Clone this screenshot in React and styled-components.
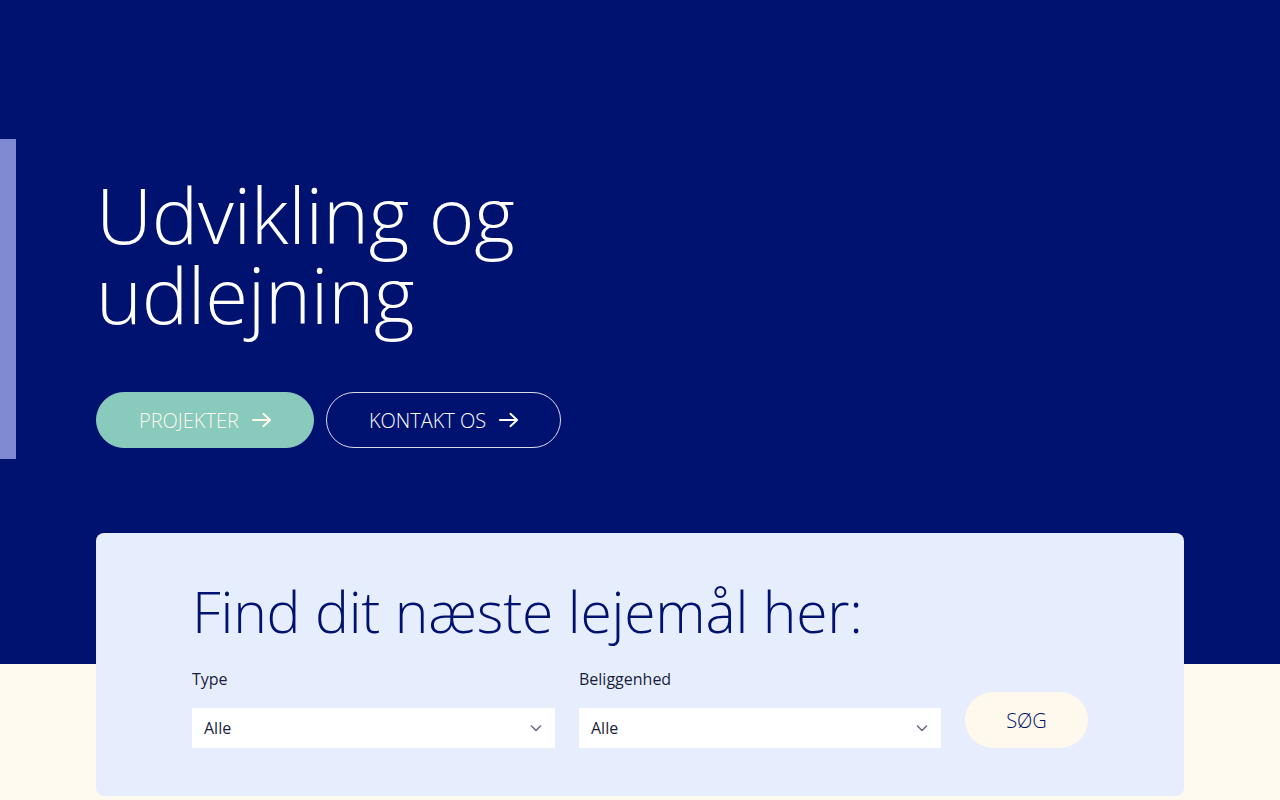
import React from 'react';
import styled, { createGlobalStyle } from 'styled-components';

const GlobalStyle = createGlobalStyle`
  html, body {
    margin: 0;
    padding: 0;
    background: #fffaef;
    font-family: "Open Sans", "Noto Sans", sans-serif;
  }
  * { box-sizing: border-box; }
`;

const Page = styled.div`
  width: 1280px;
  height: 800px;
  overflow: hidden;
  background: linear-gradient(#00126f 0, #00126f 664px, #fffaef 664px);
`;

const Hero = styled.section`
  display: flex;
  padding-top: 139px;
  height: 533px;
`;

const Accent = styled.div`
  width: 16px;
  height: 320px;
  background: #7f8ad3;
  flex-shrink: 0;
`;

const HeroContent = styled.div`
  padding-left: 80px;
  padding-top: 35px;
`;

const Title = styled.h1`
  margin: 0;
  color: #ffffff;
  font-weight: 300;
  font-size: 78px;
  line-height: 80px;
  letter-spacing: -0.3px;
`;

const Actions = styled.div`
  display: flex;
  gap: 12px;
  margin-top: 58px;
`;

const PillButton = styled.a`
  display: inline-flex;
  align-items: center;
  gap: 12px;
  height: 56px;
  padding: 0 41px 0 42px;
  border-radius: 28px;
  font-size: 20px;
  font-weight: 300;
  text-decoration: none;
  background: ${p => (p.$filled ? '#88cabc' : 'transparent')};
  color: ${p => (p.$filled ? '#fff8ea' : '#ffffff')};
  border: 1px solid ${p => (p.$filled ? '#88cabc' : 'rgba(255,255,255,0.85)')};
`;

const Arrow = () => (
  <svg width="21" height="16" viewBox="0 0 22 16" fill="none" stroke="currentColor" strokeWidth="2" strokeLinecap="round" strokeLinejoin="round">
    <path d="M2 8h18M13 1.5 20 8l-7 6.5" />
  </svg>
);

const Card = styled.div`
  margin: 0 96px;
  height: 263px;
  background: #e6edfd;
  border-radius: 8px;
  padding: 42px 96px 0;
`;

const CardTitle = styled.h2`
  margin: 0;
  color: #00126f;
  font-weight: 300;
  font-size: 57px;
  line-height: 72px;
  letter-spacing: -0.2px;
`;

const Form = styled.div`
  display: flex;
  align-items: flex-end;
  gap: 24px;
  margin-top: 20px;
`;

const Field = styled.div`
  display: flex;
  flex-direction: column;
  gap: 17px;
  width: ${p => p.$w}px;
`;

const Label = styled.div`
  font-size: 16px;
  color: #1a1d3a;
  line-height: 24px;
`;

const Select = styled.div`
  display: flex;
  align-items: center;
  justify-content: space-between;
  height: 40px;
  background: #ffffff;
  padding: 0 12px;
  font-size: 16px;
  color: #1a1d3a;
`;

const Chevron = () => (
  <svg width="14" height="14" viewBox="0 0 14 14" fill="none" stroke="#6b6e80" strokeWidth="1.6" strokeLinecap="round" strokeLinejoin="round">
    <path d="M2.5 5 7 9.5 11.5 5" />
  </svg>
);

const SearchButton = styled.button`
  height: 56px;
  width: 123px;
  border: none;
  border-radius: 28px;
  background: #fff8ec;
  color: #00126f;
  font-family: inherit;
  font-size: 20px;
  font-weight: 300;
`;

export default function App() {
  return (
    <Page>
      <GlobalStyle />
      <Hero>
        <Accent />
        <HeroContent>
          <Title>Udvikling og<br />udlejning</Title>
          <Actions>
            <PillButton $filled href="#">PROJEKTER <Arrow /></PillButton>
            <PillButton href="#">KONTAKT OS <Arrow /></PillButton>
          </Actions>
        </HeroContent>
      </Hero>
      <Card>
        <CardTitle>Find dit næste lejemål her:</CardTitle>
        <Form>
          <Field $w={363}>
            <Label>Type</Label>
            <Select>Alle <Chevron /></Select>
          </Field>
          <Field $w={362}>
            <Label>Beliggenhed</Label>
            <Select>Alle <Chevron /></Select>
          </Field>
          <SearchButton>SØG</SearchButton>
        </Form>
      </Card>
    </Page>
  );
}
